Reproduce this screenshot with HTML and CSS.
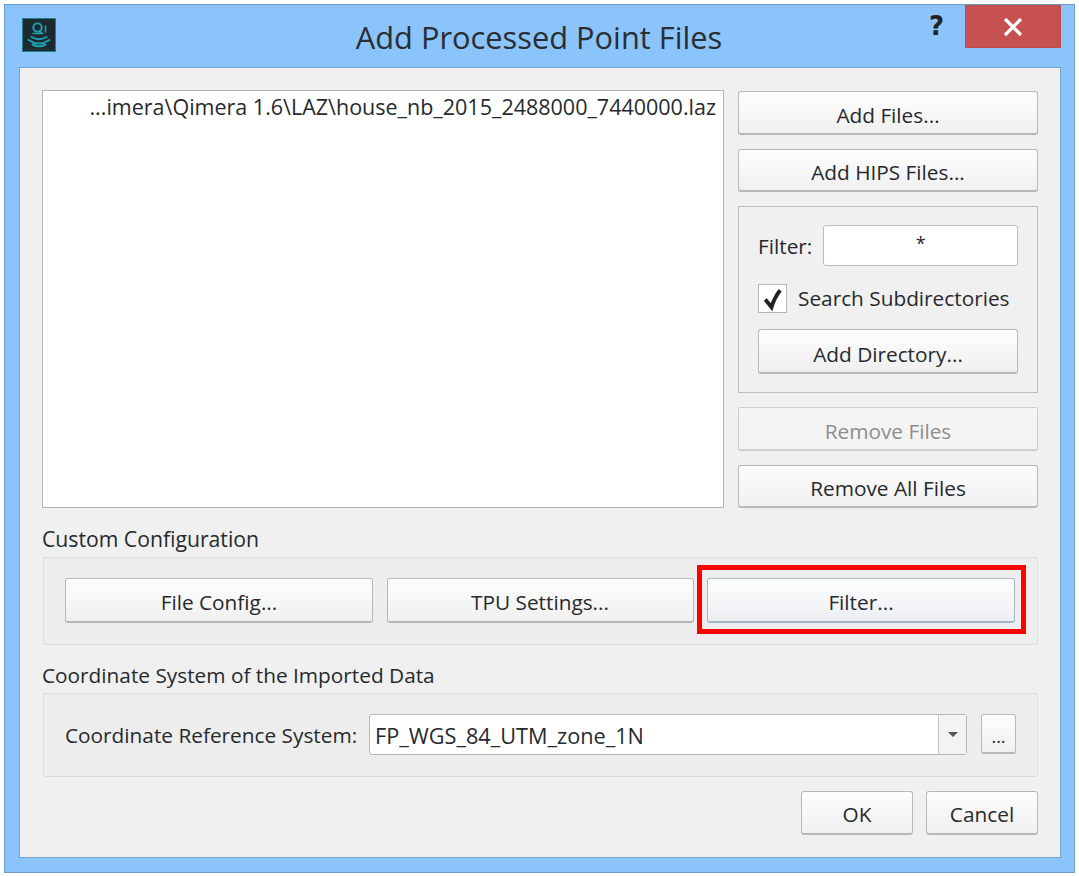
FILE: index.html
```html
<!DOCTYPE html>
<html lang="en">
<head>
<meta charset="utf-8">
<title>Add Processed Point Files</title>
<link rel="stylesheet" href="styles.css">
</head>
<body>
<div class="window">
  <header class="titlebar">
    <svg class="app-icon" viewBox="0 0 34 34" aria-hidden="true">
      <rect x="0.5" y="0.5" width="33" height="33" fill="#1c2b30" stroke="#1f7f8f"/>
      <g fill="none" stroke="#1f9db2" stroke-linecap="round">
        <circle cx="15.500" cy="9.500" r="4.200" stroke-width="2"/>
        <path d="M11 15.500h10M17.500 12.500l2.500 3M23.500 8v6" stroke-width="1.600"/>
        <path d="M9.500 19q7.500 4.500 15 0M6.500 22q10.500 7 21 0M10.500 26.500q6.500 3.500 13 0" stroke-width="2"/>
      </g>
    </svg>
    <h1 class="title">Add Processed Point Files</h1>
    <span class="help">?</span>
    <div class="close">
      <svg viewBox="0 0 20 20" class="close-x" aria-hidden="true"><path d="M2 2L18 18M18 2L2 18"/></svg>
    </div>
  </header>
  <main class="client">
    <section class="top">
      <div class="list"><div class="list-item">...imera\Qimera 1.6\LAZ\house_nb_2015_2488000_7440000.laz</div></div>
      <div class="side">
        <button class="btn side-btn">Add Files...</button>
        <button class="btn side-btn">Add HIPS Files...</button>
        <div class="dir-box">
          <div class="filter-row">
            <label class="text">Filter:</label>
            <div class="filter-input">*</div>
          </div>
          <div class="check-row">
            <span class="check"><svg viewBox="0 0 28 28" aria-hidden="true"><path d="M6.500 15L13 23Q16 13 22 5.500" /></svg></span>
            <span class="text">Search Subdirectories</span>
          </div>
          <button class="btn dir-btn">Add Directory...</button>
        </div>
        <button class="btn side-btn disabled">Remove Files</button>
        <button class="btn side-btn">Remove All Files</button>
      </div>
    </section>
    <h2 class="section-label first">Custom Configuration</h2>
    <section class="panel config">
      <button class="btn cfg-btn">File Config...</button>
      <button class="btn cfg-btn">TPU Settings...</button>
      <div class="highlighted">
        <button class="btn cfg-btn hover">Filter...</button>
        <span class="red-box"></span>
      </div>
    </section>
    <h2 class="section-label second">Coordinate System of the Imported Data</h2>
    <section class="panel crs">
      <span class="text">Coordinate Reference System:</span>
      <div class="combo">
        <span class="combo-value">FP_WGS_84_UTM_zone_1N</span>
        <span class="combo-arrow"><i class="arrow"></i></span>
      </div>
      <button class="btn more">...</button>
    </section>
    <footer class="actions">
      <button class="btn action">OK</button>
      <button class="btn action">Cancel</button>
    </footer>
  </main>
</div>
</body>
</html>
```

FILE: styles.css
```css
* { box-sizing: border-box; }
html, body { margin: 0; padding: 0; background: #fff; }
body {
  width: 1079px;
  height: 876px;
  padding: 4px 4px 3px 4px;
  font-family: "Open Sans", "Noto Sans", sans-serif;
  font-size: 20.800px;
  color: #262a2e;
}
.window {
  width: 1071px;
  height: 869px;
  background: #8ac4fa;
  border: 1px solid #6d9cc4;
  padding: 0 13px 14px 14px;
  display: flex;
  flex-direction: column;
}
.titlebar {
  height: 62px;
  display: flex;
  align-items: flex-start;
}
.app-icon { width: 34px; height: 34px; margin: 13px 0 0 3px; flex: none; }
.title {
  flex: 1;
  margin: 12px 0 0;
  padding-left: 93px;
  font-size: 30.800px;
  line-height: 40px;
  font-weight: 400;
  text-align: center;
  color: #2a2e32;
}
.help {
  font-family: "DejaVu Sans", sans-serif;
  font-weight: 700;
  font-size: 26px;
  line-height: 30px;
  margin: 6px 21px 0 0;
  color: #222;
}
.close {
  width: 96px;
  height: 43px;
  background: #c75050;
  border: 1px solid #bb4a4a;
  display: flex;
  align-items: center;
  justify-content: center;
}
.close-x { width: 20px; height: 20px; fill: none; stroke: #fff; stroke-width: 3.200; }
.client {
  flex: 1;
  background: #f0f0f0;
  border: 1px solid #76a6d2;
  padding: 22px 22px 0 22px;
  display: flex;
  flex-direction: column;
}
.top { display: flex; gap: 14px; height: 418px; }
.list {
  width: 682px;
  background: #fff;
  border: 1px solid #b4b4b4;
  padding: 2px 7px 0 0;
}
.list-item { text-align: right; line-height: 28px; white-space: nowrap; font-size: 21.500px; }
.side { flex: 1; display: flex; flex-direction: column; gap: 14px; padding-top: 1px; }
.btn {
  font: inherit;
  color: inherit;
  background: linear-gradient(#fdfdfd, #f0f0f0);
  border: 1px solid #b8b8b8;
  border-bottom-width: 2px;
  border-radius: 3px;
  padding: 4px 0 0;
  line-height: 1;
}
.side-btn { height: 43.500px; flex: none; padding-top: 6px; }
.disabled { color: #8e8e8e; border-color: #cfcfcf; background: #f4f4f4; }
.dir-box {
  height: 187px;
  flex: none;
  border: 1px solid #bdbdbd;
  padding: 18px 19px 0;
  display: flex;
  flex-direction: column;
}
.text { line-height: 28px; white-space: nowrap; }
.filter-row { display: flex; align-items: center; gap: 11px; height: 41px; }
.filter-input {
  flex: 1;
  height: 41px;
  background: #fff;
  border: 1px solid #bcbcbc;
  border-radius: 3px;
  text-align: center;
  line-height: 34px;
  font-size: 18px;
}
.check-row { display: flex; align-items: center; gap: 11px; margin-top: 17px; height: 30px; }
.check {
  width: 29px;
  height: 29px;
  background: #fff;
  border: 1px solid #b8b8b8;
  flex: none;
}
.check svg { display: block; width: 27px; height: 27px; fill: none; stroke: #222; stroke-width: 4; }
.dir-btn { height: 45px; margin-top: 16px; flex: none; padding-top: 6px; }
.section-label {
  margin: 0;
  font-size: inherit;
  font-weight: 400;
  line-height: 28px;
}
.section-label.first { margin-top: 17px; font-size: 21.200px; }
.section-label.second { margin-top: 16px; }
.panel {
  margin: 4px 0 0 1px;
  background: #ededed;
  border: 1px solid #dcdcdc;
  border-radius: 2px;
  padding: 0 21px;
}
.config {
  height: 88px;
  display: grid;
  grid-template-columns: 308px 307px 308px;
  column-gap: 13.500px;
  padding-top: 20px;
}
.cfg-btn { width: 100%; height: 45px; }
.highlighted { position: relative; }
.hover {
  background: linear-gradient(#fdfdfe, #eceff2);
  border-color: #a3b9c7;
}
.red-box {
  position: absolute;
  left: -10px;
  top: -13px;
  width: 329px;
  height: 69px;
  border: 5px solid #f00;
}
.crs {
  height: 84px;
  display: flex;
  align-items: flex-start;
  padding-top: 20px;
}
.crs .text { margin-top: 7px; width: 304px; flex: none; }
.combo {
  width: 598px;
  height: 41px;
  flex: none;
  background: #fff;
  border: 1px solid #b8b8b8;
  border-radius: 3px;
  display: flex;
}
.combo-value { flex: 1; padding-left: 5px; line-height: 41px; font-size: 21.700px; }
.combo-arrow {
  width: 28px;
  border-left: 1px solid #c4c4c4;
  background: #f3f3f3;
  display: flex;
  align-items: center;
  justify-content: center;
}
.arrow {
  width: 0;
  height: 0;
  border-left: 5px solid transparent;
  border-right: 5px solid transparent;
  border-top: 5px solid #555;
}
.more { width: 35px; height: 40px; margin-left: 14px; flex: none; font-size: 18px; }
.actions { display: flex; justify-content: flex-end; gap: 13px; margin-top: 14px; }
.action { width: 112px; height: 44px; }
```
